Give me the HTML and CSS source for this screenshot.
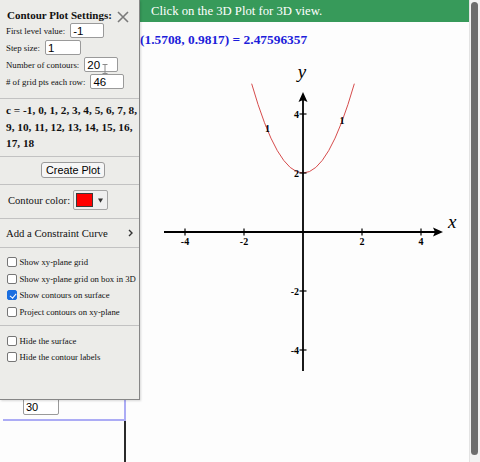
FILE: index.html
```html
<!DOCTYPE html>
<html>
<head>
<meta charset="utf-8">
<title>Contour Plot</title>
<link rel="stylesheet" href="styles.css">
</head>
<body>
<div class="page">
  <div class="leftcol">
    <div class="sheet"><input class="field field-30" value="30"></div>
    <div class="stem"></div>
  </div>
  <div class="main">
    <div class="banner">Click on the 3D Plot for 3D view.</div>
    <div class="readout">(1.5708, 0.9817) = 2.47596357</div>
    <svg class="plot" width="329" height="410" viewBox="140 52 329 410">
      <path class="curve" d="M251.67 83.69 Q303 262.31 354.33 83.69"/>
      <line class="axis" x1="164" y1="232" x2="436" y2="232"/>
      <polygon class="arrow" points="443,232 433,227.5 435,232 433,236.5"/>
      <line class="axis" x1="303" y1="371" x2="303" y2="100"/>
      <polygon class="arrow" points="303,92 298.5,102 303,100 307.5,102"/>
      <g class="tick">
        <line x1="185" y1="228.5" x2="185" y2="235.5"/>
        <line x1="244" y1="228.5" x2="244" y2="235.5"/>
        <line x1="362" y1="228.5" x2="362" y2="235.5"/>
        <line x1="421" y1="228.5" x2="421" y2="235.5"/>
        <line x1="299.5" y1="114" x2="306.5" y2="114"/>
        <line x1="299.5" y1="173" x2="306.5" y2="173"/>
        <line x1="299.5" y1="291" x2="306.5" y2="291"/>
        <line x1="299.5" y1="350" x2="306.5" y2="350"/>
      </g>
      <g class="num mid">
        <text x="185" y="245">-4</text>
        <text x="244" y="245">-2</text>
        <text x="362" y="245">2</text>
        <text x="421" y="245">4</text>
        <text x="267.5" y="132">1</text>
        <text x="342" y="124">1</text>
      </g>
      <g class="num end">
        <text x="299" y="117.5">4</text>
        <text x="299" y="176.5">2</text>
        <text x="299" y="294.5">-2</text>
        <text x="299" y="353.5">-4</text>
      </g>
      <text class="var" x="302" y="78" text-anchor="middle">y</text>
      <text class="var" x="448" y="228">x</text>
    </svg>
  </div>
  <div class="scroll"><div class="thumb"></div></div>
</div>

<div class="panel">
  <div class="sec sec-form">
    <div class="title-row">
      <span class="title">Contour Plot Settings:</span>
      <svg class="close" width="12" height="12" viewBox="0 0 12 12"><path d="M1 1 L11 11 M11 1 L1 11"/></svg>
    </div>
    <div class="frow"><label>First level value:</label><input class="field w34" value="-1"></div>
    <div class="frow"><label>Step size:</label><input class="field w36" value="1"></div>
    <div class="frow"><label>Number of contours:</label><input class="field w34" value="20"></div>
    <div class="frow"><label># of grid pts each row:</label><input class="field w34" value="46"></div>
  </div>
  <div class="sec sec-levels">c = -1, 0, 1, 2, 3, 4, 5, 6, 7, 8,<br>9, 10, 11, 12, 13, 14, 15, 16,<br>17, 18</div>
  <div class="sec sec-btn"><button class="btn">Create Plot</button></div>
  <div class="sec sec-color">
    <span>Contour color:</span>
    <span class="picker"><span class="swatch"></span><svg class="caret" width="5" height="5" viewBox="0 0 5 5"><path d="M0 0.5 H5 L2.5 4.8 Z"/></svg></span>
  </div>
  <div class="sec sec-curve">
    <span>Add a Constraint Curve</span>
    <svg class="chev" width="5" height="8" viewBox="0 0 5 8"><path d="M1 1 L4 4 L1 7"/></svg>
  </div>
  <div class="sec sec-checks1">
    <label class="chk"><input type="checkbox">Show xy-plane grid</label>
    <label class="chk"><input type="checkbox">Show xy-plane grid on box in 3D</label>
    <label class="chk"><input type="checkbox" checked>Show contours on surface</label>
    <label class="chk"><input type="checkbox">Project contours on xy-plane</label>
  </div>
  <div class="sec sec-checks2">
    <label class="chk"><input type="checkbox">Hide the surface</label>
    <label class="chk"><input type="checkbox">Hide the contour labels</label>
  </div>
  <svg class="cursor" width="6" height="10" viewBox="0 0 6 10"><path d="M0.5 0.5 H5.5 M3 0.5 V9.5 M0.5 9.5 H5.5"/></svg>
</div>
</body>
</html>
```

FILE: styles.css
```css
* { box-sizing: border-box; }
html, body { margin: 0; padding: 0; }
body {
  width: 480px;
  height: 462px;
  overflow: hidden;
  position: relative;
  background: #fdfdfd;
  font-family: "Liberation Serif", "Times New Roman", serif;
  color: #111;
}
.page { display: flex; height: 462px; }

.leftcol { width: 140px; display: flex; flex-direction: column; }
.sheet {
  margin-left: 3px;
  width: 123px;
  height: 421px;
  border-right: 2px solid #acacf5;
  border-bottom: 2px solid #acacf5;
  display: flex;
  flex-direction: column;
  justify-content: flex-end;
  padding: 0 0 4px 20px;
}
.stem { margin-left: 124px; width: 2px; flex: 1; background: #2a2a2a; }

.field {
  height: 15.5px;
  border: 1px solid #9a9a9a;
  border-radius: 2px;
  padding: 0 2px;
  font-family: "Liberation Sans", Arial, sans-serif;
  font-size: 11.5px;
  color: #000;
  background: #fff;
  margin: 0 0 0 5px;
  outline: none;
}
.field-30 { width: 36px; height: 17px; margin: 0; font-size: 11px; }
.w34 { width: 34px; }
.w36 { width: 36px; }

.main { width: 329px; display: flex; flex-direction: column; }
.banner {
  height: 22px;
  background: #379a5a;
  color: #fff;
  font-size: 12.7px;
  line-height: 22px;
  padding-left: 11px;
  white-space: nowrap;
}
.readout {
  height: 30px;
  padding-top: 10px;
  font-weight: bold;
  font-size: 13.4px;
  line-height: 16px;
  color: #1d1dda;
  white-space: nowrap;
}
.plot { display: block; }
.curve { fill: none; stroke: #d64c4c; stroke-width: 1; }
.axis { stroke: #000; stroke-width: 1.8; }
.arrow { fill: #000; }
.tick line { stroke: #000; stroke-width: 1.2; }
.num { font-family: "Liberation Serif", serif; font-weight: bold; font-size: 10px; fill: #000; }
.num.mid { text-anchor: middle; }
.num.end { text-anchor: end; }
.var { font-family: "Liberation Serif", serif; font-style: italic; font-size: 19px; fill: #000; }

.scroll {
  width: 11px;
  background: #f3f3f3;
  border-left: 1px solid #e3e3e3;
  padding: 2px 2px 7px 1px;
}
.thumb { height: 100%; width: 7px; border-radius: 4px; background: #6e6e6e; }

.panel {
  position: absolute;
  left: 0;
  top: 0;
  width: 140px;
  height: 400px;
  background: #ecece9;
  border-right: 1px solid #868686;
  border-bottom: 1px solid #868686;
  box-shadow: 1px 1px 2px rgba(0,0,0,0.15);
}
.sec + .sec { border-top: 1px solid #c2c2c2; }

.sec-form { height: 98px; }
.title-row {
  height: 22px;
  display: flex;
  justify-content: space-between;
  align-items: flex-end;
  padding: 0 10px 0 7px;
}
.title { font-weight: bold; font-size: 11px; line-height: 13px; white-space: nowrap; }
.close { display: block; margin-bottom: -1px; }
.close path { stroke: #7a7a7a; stroke-width: 1.6; fill: none; }
.frow {
  height: 17px;
  display: flex;
  align-items: center;
  padding-left: 6px;
  font-size: 8.8px;
  white-space: nowrap;
}

.sec-levels {
  height: 58px;
  padding: 3px 0 0 6px;
  font-weight: bold;
  font-size: 11.3px;
  line-height: 16.5px;
  white-space: nowrap;
}

.sec-btn { height: 28px; padding: 5px 0 0 41px; }
.btn {
  display: block;
  width: 64px;
  height: 16px;
  padding: 0;
  border: 1px solid #9a9a9a;
  border-radius: 3px;
  background: #f6f6f6;
  font-family: "Liberation Sans", Arial, sans-serif;
  font-size: 10.8px;
  color: #000;
}

.sec-color {
  height: 34px;
  display: flex;
  align-items: center;
  padding: 0 0 3px 8px;
  font-size: 10.6px;
  white-space: nowrap;
}
.picker {
  margin-left: 3px;
  width: 35px;
  height: 20px;
  border: 1px solid #a5a5a5;
  border-radius: 2px;
  background: #efefef;
  display: flex;
  align-items: center;
  padding-left: 2px;
}
.swatch { width: 17px; height: 14px; background: #ff0000; border: 1px solid #3a3a3a; }
.caret { display: block; margin-left: 5px; }
.caret path { fill: #333; }

.sec-curve {
  height: 29px;
  display: flex;
  align-items: center;
  justify-content: space-between;
  padding: 0 6px 0 6px;
  font-size: 10.7px;
  white-space: nowrap;
}
.chev { display: block; }
.chev path { fill: none; stroke: #333; stroke-width: 1.4; }

.sec-checks1 { height: 78px; padding-top: 6px; }
.sec-checks2 { padding-top: 6.5px; }
.chk {
  height: 16.5px;
  display: flex;
  align-items: center;
  font-size: 8.7px;
  white-space: nowrap;
}
.chk input {
  appearance: none;
  -webkit-appearance: none;
  position: relative;
  width: 10px;
  height: 10px;
  margin: 0 2.5px 0 7px;
  border: 1px solid #767676;
  border-radius: 2px;
  background: #fff;
  flex: none;
}
.chk input:checked { background: #1b6fe0; border-color: #1b6fe0; }
.chk input:checked::before {
  content: "";
  position: absolute;
  left: 2.6px;
  top: 0.4px;
  width: 2.6px;
  height: 5.4px;
  border-right: 1.6px solid #fff;
  border-bottom: 1.6px solid #fff;
  transform: rotate(40deg);
}

.cursor { position: absolute; left: 102px; top: 64px; display: block; }
.cursor path { stroke: #8a8a8a; stroke-width: 1; fill: none; }
```
